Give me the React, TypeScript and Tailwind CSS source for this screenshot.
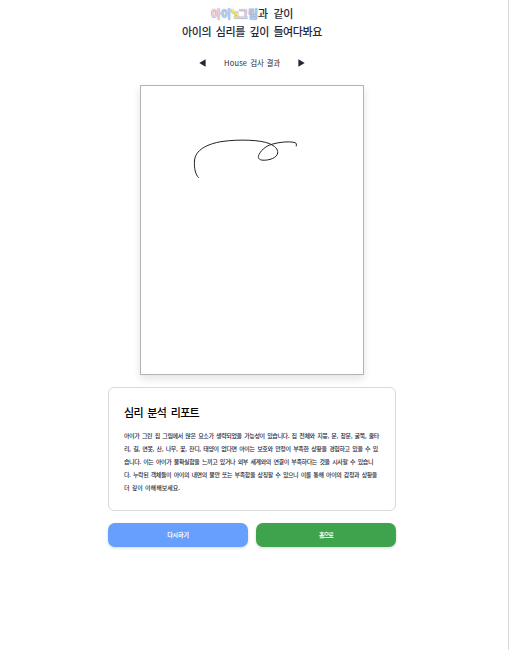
const reportLines = [
  { text: '아이가 그린 집 그림에서 많은 요소가 생략되었을 가능성이 있습니다. 집 전체와 지붕, 문, 창문, 굴뚝, 울타', width: 'w-[255px]' },
  { text: '리, 길, 연못, 산, 나무, 꽃, 잔디, 태양이 없다면 아이는 보호와 안정이 부족한 상황을 경험하고 있을 수 있', width: 'w-[254px]' },
  { text: '습니다. 이는 아이가 불확실함을 느끼고 있거나 외부 세계와의 연결이 부족하다는 것을 시사할 수 있습니', width: 'w-[249px]' },
  { text: '다. 누락된 객체들이 아이의 내면의 불안 또는 부족함을 상징할 수 있으니 이를 통해 아이의 감정과 상황을', width: 'w-[253px]' },
  { text: '더 깊이 이해해보세요.', width: 'w-[56px] tracking-[0px]' },
];

const line = 'whitespace-nowrap [text-align-last:justify]';

function Heading() {
  return (
    <h1 className="flex flex-col items-center text-[11px] font-medium leading-[18px] tracking-[-0.4px] text-[#1f2937]">
      <span className={`w-[82px] ${line}`}>
        <span className="font-bold tracking-[-0.2px] [text-shadow:0_0_1px_#8290a8,0_1px_1px_#b4bdca]">
          <span className="text-[#fbcfe0]">아</span>
          <span className="text-[#b4d2fa]">이</span>
          <span className="tracking-[-0.9px] text-[#fdeb5c]">'s</span>
          <span className="text-[#f8c6e0]">그</span>
          <span className="text-[#aacbf8]">림</span>
        </span>
        과 같이
      </span>
      <span className={`w-[140px] ${line}`}>아이의 심리를 깊이 들여다봐요</span>
    </h1>
  );
}

function Pager() {
  return (
    <nav className="mt-[15px] flex h-4 items-center justify-center gap-[18px] text-[#1f2937]">
      <button aria-label="이전">
        <svg width="7" height="8" viewBox="0 0 7 8" className="block"><path d="M6.6 0.3V7.7L0.3 4Z" fill="currentColor" /></svg>
      </button>
      <span className={`w-[56px] text-[7.5px] leading-4 tracking-[-0.2px] ${line}`}>
        <span className="tracking-[0.2px]">House</span> 검사 결과
      </span>
      <button aria-label="다음">
        <svg width="7" height="8" viewBox="0 0 7 8" className="block"><path d="M0.4 0.3V7.7L6.7 4Z" fill="currentColor" /></svg>
      </button>
    </nav>
  );
}

export default function App() {
  return (
    <div className="h-[650px] w-[509px] overflow-hidden border-r border-[#d5dadd] bg-white font-['Noto_Sans_CJK_KR',sans-serif]">
      <main className="ml-[108px] flex w-[288px] flex-col pt-1">
        <Heading />
        <Pager />
        <div className="mx-auto mt-3.5 h-[290px] w-[224px] border border-[#b3b3b3] bg-white shadow-[0_4px_8px_rgba(0,0,0,0.11)]">
          <svg width="222" height="288" viewBox="141 86 222 288" className="block" fill="none" stroke="#222" strokeWidth="1" strokeLinecap="round">
            <path d="M198.5 177.5C195.500 175 194 168 194.500 161C195 150 207 144 222 141.500C239 139 261 140 269 143.500C275 146 278 149 277.700 153C277 158 269 160.500 263 160.200C258.500 160 257.500 157.500 259 154.500C262 149 267 145 275 143.500C283 141.500 292 141.500 295.500 142.800Q297 143.600 296.300 146" />
          </svg>
        </div>
        <section className="mt-3 h-[124px] rounded-[6px] border border-[#d9dbde] px-[15px] pt-[15px]">
          <h2 className={`w-[75px] text-[11px] font-medium leading-[18px] tracking-[-0.7px] text-black ${line}`}>심리 분석 리포트</h2>
          <div className="mt-2 text-[6px] font-medium leading-[13px] tracking-[-0.4px] text-[#1f2937]">
            {reportLines.map((row) => (
              <p key={row.text} className={`${row.width} ${line}`}>{row.text}</p>
            ))}
          </div>
        </section>
        <div className="mt-3 grid grid-cols-2 gap-2 text-[6px] font-bold leading-none text-white">
          <button className="h-6 rounded-[7px] bg-[#669ffd] tracking-[-0.1px] shadow-[0_1px_3px_rgba(0,0,0,0.16)]">다시하기</button>
          <button className="h-6 rounded-[7px] bg-[#3fa34d] tracking-[-0.8px] shadow-[0_1px_3px_rgba(0,0,0,0.16)]">홈으로</button>
        </div>
      </main>
    </div>
  );
}
